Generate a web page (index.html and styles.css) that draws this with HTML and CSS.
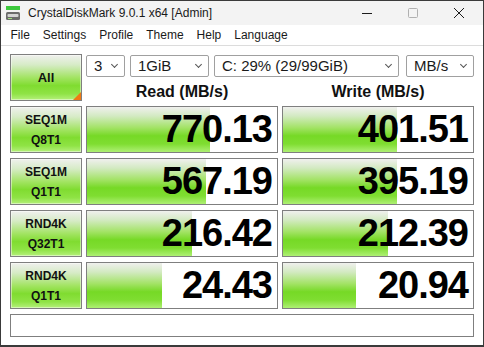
FILE: index.html
```html
<!DOCTYPE html>
<html lang="en">
<head>
    <meta charset="UTF-8">
    <title>CrystalDiskMark 9.0.1 x64 [Admin]</title>
    <link rel="stylesheet" href="styles.css">
</head>
<body>
<div class="window">
    <div class="titlebar">
        <svg class="app-icon" width="16" height="16" viewBox="0 0 16 16">
            <rect x="1" y="1" width="14" height="4" fill="#3cc83c"/>
            <rect x="1" y="7" width="14" height="8" rx="1.5" fill="#6b6b6b"/>
            <rect x="2.5" y="9" width="11" height="3" rx="1" fill="#d4d4d4"/>
            <rect x="3" y="13" width="4" height="1" fill="#9de07a"/>
        </svg>
        <span class="title">CrystalDiskMark 9.0.1 x64 [Admin]</span>
        <div class="controls">
            <svg width="46" height="24" viewBox="0 0 46 24"><path d="M18 12.5h10" stroke="#1b1b1b" stroke-width="1"/></svg>
            <svg width="46" height="24" viewBox="0 0 46 24"><rect x="18.5" y="7.5" width="9" height="9" rx="1" fill="none" stroke="#b0b0b0"/></svg>
            <svg width="46" height="24" viewBox="0 0 46 24"><path d="M18 7l10 10M28 7l-10 10" stroke="#1b1b1b" stroke-width="1"/></svg>
        </div>
    </div>

    <div class="menubar">
        <span>File</span>
        <span>Settings</span>
        <span>Profile</span>
        <span>Theme</span>
        <span>Help</span>
        <span>Language</span>
    </div>

    <div class="main">
        <div class="btn all">All</div>
        <div class="top">
            <div class="selects">
                <div class="combo c-count">3</div>
                <div class="combo c-size">1GiB</div>
                <div class="combo c-drive">C: 29% (29/99GiB)</div>
                <div class="combo c-unit">MB/s</div>
            </div>
            <div class="heads">
                <div>Read (MB/s)</div>
                <div>Write (MB/s)</div>
            </div>
        </div>

        <div class="btn">SEQ1M<br>Q8T1</div>
        <div class="score" style="background-size: 123px 100%">770.13</div>
        <div class="score" style="background-size: 114px 100%">401.51</div>

        <div class="btn">SEQ1M<br>Q1T1</div>
        <div class="score" style="background-size: 119px 100%">567.19</div>
        <div class="score" style="background-size: 114px 100%">395.19</div>

        <div class="btn">RND4K<br>Q32T1</div>
        <div class="score" style="background-size: 105px 100%">216.42</div>
        <div class="score" style="background-size: 105px 100%">212.39</div>

        <div class="btn">RND4K<br>Q1T1</div>
        <div class="score" style="background-size: 75px 100%">24.43</div>
        <div class="score" style="background-size: 73px 100%">20.94</div>
    </div>

    <div class="status"></div>
</div>
</body>
</html>
```

FILE: styles.css
```css
body {
    margin: 0;
    padding: 0;
    background-color: #ffffff;
    font-family: "Liberation Sans", Arial, sans-serif;
    color: #000000;
}

.window {
    width: 484px;
    height: 347px;
    box-sizing: border-box;
    border: 1px solid #3a3a3a;
    border-bottom-width: 2px;
    background-color: #ffffff;
}

/* barra de titulo */
.titlebar {
    height: 24px;
    display: flex;
    align-items: center;
    background-color: #f3f3f3;
}

.app-icon {
    margin-left: 4px;
    margin-right: 7px;
}

.title {
    font-size: 12px;
    color: #1a1a1a;
}

.controls {
    margin-left: auto;
    display: flex;
    margin-right: 1px;
}

.controls svg {
    display: block;
}

/* menu */
.menubar {
    height: 20px;
    display: flex;
    align-items: center;
    padding-left: 3px;
    font-size: 12px;
    color: #1a1a1a;
    border-bottom: 1px solid #dcdcdc;
}

.menubar span {
    padding: 0 6.5px;
}

/* tabla principal */
.main {
    display: grid;
    grid-template-columns: 72px 192px 192px;
    grid-auto-rows: 47px;
    column-gap: 4px;
    row-gap: 5px;
    padding: 8px 0 0 9px;
}

.btn {
    position: relative;
    box-sizing: border-box;
    border: 1px solid #7f7f7f;
    box-shadow: inset 0 0 0 1px rgba(255, 255, 255, 0.45);
    background: linear-gradient(to bottom, #f0f0ee 0%, #d6ebc6 22%, #a3e464 50%, #80dc30 68%, #8fe345 86%, #b5f07c 100%);
    display: flex;
    align-items: center;
    justify-content: center;
    text-align: center;
    font-weight: bold;
    font-size: 12px;
    line-height: 20px;
    color: #111111;
}

.all {
    font-size: 13px;
}

.all::after {
    content: "";
    position: absolute;
    right: 0;
    bottom: 0;
    border-style: solid;
    border-width: 0 0 8px 8px;
    border-color: transparent transparent #f07a14 transparent;
}

.top {
    grid-column: 2 / 4;
    display: flex;
    flex-direction: column;
}

.selects {
    display: flex;
    margin-top: 1px;
    height: 22px;
}

.combo {
    position: relative;
    box-sizing: border-box;
    height: 22px;
    border: 1px solid #a0a0a0;
    border-radius: 2px;
    padding-left: 7px;
    font-size: 15px;
    line-height: 20px;
    color: #1a1a1a;
    background-color: #ffffff;
}

.combo::after {
    content: "";
    position: absolute;
    right: 7px;
    top: 6px;
    width: 4px;
    height: 4px;
    border-right: 1px solid #555555;
    border-bottom: 1px solid #555555;
    transform: rotate(45deg);
}

.c-count { width: 39px; margin-right: 5px; }
.c-size { width: 79px; margin-right: 5px; }
.c-drive { width: 185px; margin-right: 7px; }
.c-unit { width: 68px; }

.heads {
    display: grid;
    grid-template-columns: 192px 192px;
    column-gap: 4px;
    padding-top: 6px;
    font-size: 16px;
    font-weight: bold;
    line-height: 18px;
    text-align: center;
    color: #111111;
}

.score {
    box-sizing: border-box;
    border: 1px solid #7f7f7f;
    background-color: #ffffff;
    background-image: linear-gradient(to bottom, #f0f0ee 0%, #d3eac2 20%, #a3e366 46%, #76d926 64%, #7fdd31 82%, #aef074 100%);
    background-repeat: no-repeat;
    display: flex;
    align-items: center;
    justify-content: flex-end;
    padding-right: 5px;
    font-size: 38px;
    letter-spacing: -1px;
    font-weight: bold;
    color: #000000;
}

.status {
    box-sizing: border-box;
    height: 23px;
    margin: 5px 9px 0 9px;
    border: 1px solid #7f7f7f;
}
```
